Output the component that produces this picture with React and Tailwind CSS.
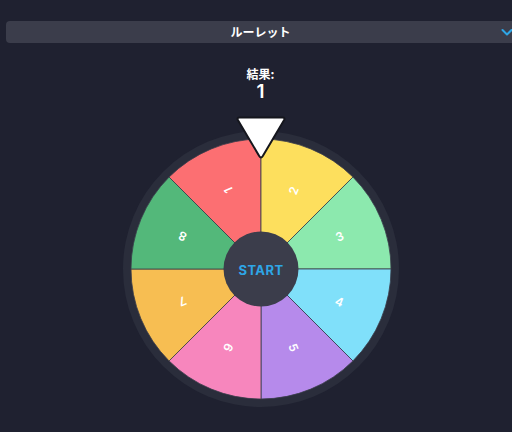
import React from "react";

const COLORS = ["#fc6f72", "#fddf5d", "#8ce9ae", "#80e0fa", "#b68aeb", "#f786bd", "#f7be52", "#53b87a"];

function Wheel() {
  const cx = 138, cy = 138, R = 130;
  const pt = (deg, r) => {
    const rad = ((deg - 90) * Math.PI) / 180;
    return [cx + r * Math.cos(rad), cy + r * Math.sin(rad)];
  };
  return (
    <svg width="276" height="276" viewBox="0 0 276 276">
      <circle cx={cx} cy={cy} r="138" fill="#2a2d3b" />
      {COLORS.map((c, i) => {
        const a0 = (i - 1) * 45;
        const a1 = i * 45;
        const [x0, y0] = pt(a0, R);
        const [x1, y1] = pt(a1, R);
        return (
          <path
            key={i}
            d={`M${cx} ${cy} L${x0} ${y0} A${R} ${R} 0 0 1 ${x1} ${y1} Z`}
            fill={c}
            stroke="#3a3c4a"
            strokeWidth="0.8"
          />
        );
      })}
      {COLORS.map((c, i) => {
        const mid = (i - 1) * 45 + 22.5;
        const [x, y] = pt(mid, 85);
        return (
          <text
            key={"t" + i}
            x={x}
            y={y}
            fill="#ffffff"
            fontSize="12"
            fontWeight="600"
            fontFamily="Inter, 'Noto Sans', sans-serif"
            textAnchor="middle"
            dominantBaseline="central"
            transform={`rotate(${mid - 90} ${x} ${y})`}
          >
            {i + 1}
          </text>
        );
      })}
      <circle cx={cx} cy={cy} r="37.5" fill="#3b3d4b" />
      <text
        x={cx}
        y={cy + 0.5}
        fill="#2ea6e6"
        fontSize="13"
        fontWeight="700"
        fontFamily="Inter, 'Noto Sans', sans-serif"
        textAnchor="middle"
        dominantBaseline="central"
        letterSpacing="0.4"
      >
        START
      </text>
    </svg>
  );
}

export default function App() {
  return (
    <div className="w-[512px] h-[432px] overflow-hidden bg-[#1f2130]" style={{ fontFamily: "Inter, 'Noto Sans CJK JP', sans-serif" }}>
      <div className="w-[521px] pt-[21px] px-[6px] flex flex-col items-center">
        <div className="w-full h-[22px] rounded-[4px] bg-[#3b3d4b] relative flex items-center justify-center">
          <span className="text-white text-[12px] font-bold leading-none" style={{ fontFamily: "'Noto Sans CJK JP', sans-serif" }}>ルーレット</span>
          <svg className="absolute right-[2px] top-[6px]" width="12" height="10" viewBox="0 0 12 10">
            <path d="M1.5 3 L6 7.5 L10.5 3" stroke="#2ea6e6" strokeWidth="2" fill="none" strokeLinecap="round" strokeLinejoin="round" />
          </svg>
        </div>
        <div className="mt-[25px] flex flex-col items-center text-white font-bold leading-none">
          <span className="text-[12px]" style={{ fontFamily: "'Noto Sans CJK JP', sans-serif" }}>結果:</span>
          <span className="text-[19px] font-semibold mt-[2px]">1</span>
        </div>
        <div className="relative mt-[30px] w-[276px] h-[276px]">
          <Wheel />
          <svg className="absolute left-[112px] top-[-15px]" width="52" height="44" viewBox="0 0 52 44">
            <path d="M4.5 1.5 L47.5 1.5 Q50.5 1.5 49 4.2 L27.8 40 Q26 42.8 24.2 40 L3 4.2 Q1.5 1.5 4.5 1.5 Z" fill="#ffffff" stroke="#15161d" strokeWidth="2" strokeLinejoin="round" />
          </svg>
        </div>
      </div>
    </div>
  );
}
